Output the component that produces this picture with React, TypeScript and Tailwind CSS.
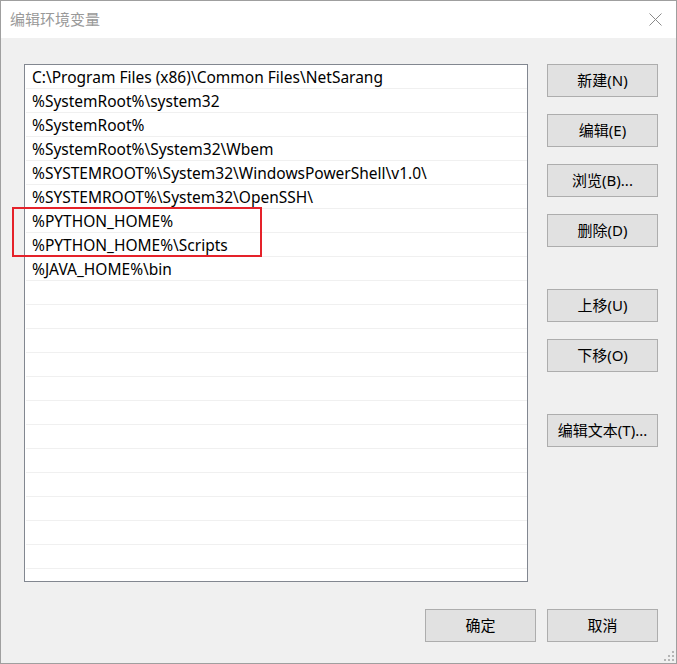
import React from 'react';

const paths = [
  'C:\\Program Files (x86)\\Common Files\\NetSarang',
  '%SystemRoot%\\system32',
  '%SystemRoot%',
  '%SystemRoot%\\System32\\Wbem',
  '%SYSTEMROOT%\\System32\\WindowsPowerShell\\v1.0\\',
  '%SYSTEMROOT%\\System32\\OpenSSH\\',
  '%PYTHON_HOME%',
  '%PYTHON_HOME%\\Scripts',
  '%JAVA_HOME%\\bin',
];

const rows = Array.from({ length: 22 }, (_, i) => paths[i] ?? '');

const font = { fontFamily: '"Noto Sans", "Noto Sans CJK SC", sans-serif' };

function Btn({ label, className = '' }: { label: string; className?: string }) {
  return (
    <button
      className={`h-[33px] w-[111px] border border-[#adadad] bg-[#e1e1e1] text-[15px] text-black flex items-center justify-center ${className}`}
    >
      {label}
    </button>
  );
}

export default function App() {
  return (
    <div className="w-[677px] h-[664px] border border-[#9f9f9f] flex flex-col bg-[#f0f0f0] relative" style={font}>
      {/* Title bar */}
      <div className="h-[37px] bg-white flex items-center justify-between pl-[9px] pr-[14px] shrink-0">
        <span className="text-[15px] text-[#999999]">编辑环境变量</span>
        <svg width="13" height="13" viewBox="0 0 13 13">
          <path d="M0.5 0.5 L12.5 12.5 M12.5 0.5 L0.5 12.5" stroke="#8a8a8a" strokeWidth="1" fill="none" />
        </svg>
      </div>

      {/* Body */}
      <div className="flex-1 flex flex-col pl-[23px] pr-[18px] pt-[26px]">
        <div className="flex gap-[19px]">
          {/* List */}
          <div className="relative w-[504px] h-[518px] border border-[#828790] bg-white">
            <div className="h-full overflow-hidden pl-px">
              {rows.map((t, i) => (
                <div key={i} className="h-[24px] border-b border-[#f0f0f0] pl-[6px] pt-[2px] flex items-center text-[15.5px] text-black whitespace-nowrap">
                  {t}
                </div>
              ))}
            </div>
            <div className="absolute left-[-13px] top-[142px] w-[250px] h-[50px] border-2 border-[#e5222a]" />
          </div>

          {/* Side buttons */}
          <div className="flex flex-col">
            <Btn label="新建(N)" />
            <Btn label="编辑(E)" className="mt-[17px]" />
            <Btn label="浏览(B)..." className="mt-[17px]" />
            <Btn label="删除(D)" className="mt-[17px]" />
            <Btn label="上移(U)" className="mt-[42px]" />
            <Btn label="下移(O)" className="mt-[17px]" />
            <Btn label="编辑文本(T)..." className="mt-[42px]" />
          </div>
        </div>

        {/* Bottom buttons */}
        <div className="flex justify-end gap-[11px] mt-[27px]">
          <Btn label="确定" />
          <Btn label="取消" />
        </div>
      </div>

      {/* Resize grip */}
      <svg className="absolute right-[1px] bottom-0" width="12" height="12" viewBox="0 0 12 12">
        <g fill="#b5b5b5">
          <rect x="9" y="0" width="2" height="2" />
          <rect x="5" y="4" width="2" height="2" />
          <rect x="9" y="4" width="2" height="2" />
          <rect x="1" y="8" width="2" height="2" />
          <rect x="5" y="8" width="2" height="2" />
          <rect x="9" y="8" width="2" height="2" />
        </g>
      </svg>
    </div>
  );
}
